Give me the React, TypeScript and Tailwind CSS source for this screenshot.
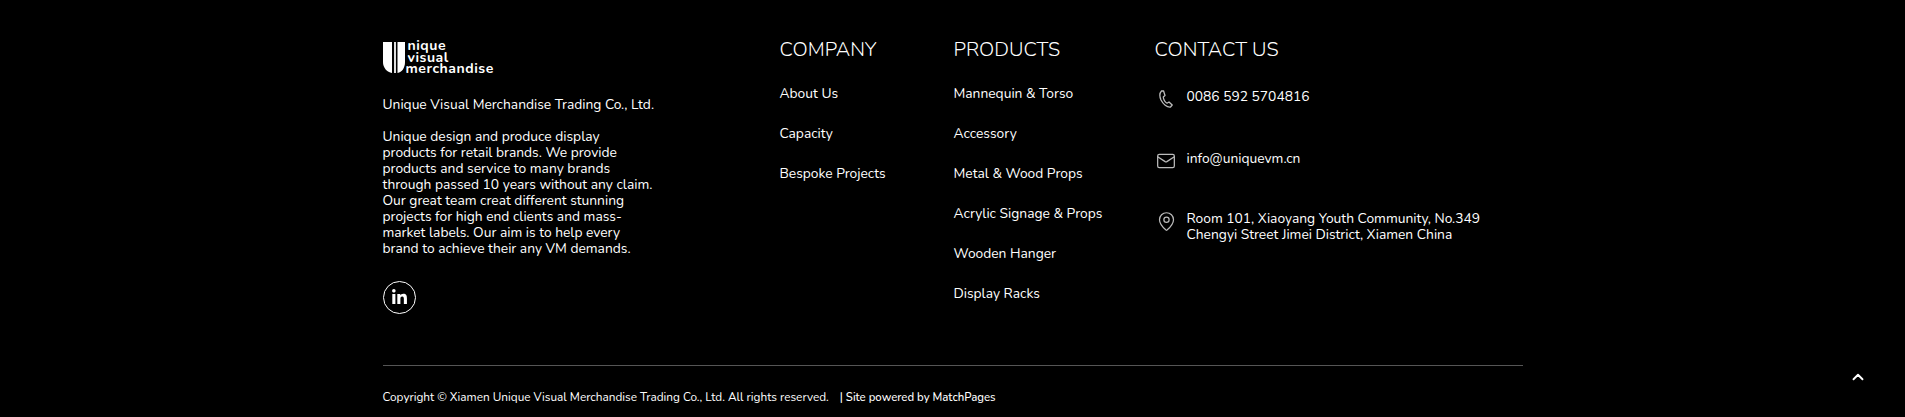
import { ChevronUp, Mail, MapPin } from "lucide-react";
import { FaLinkedinIn } from "react-icons/fa";

const company = ["About Us", "Capacity", "Bespoke Projects"];
const products = [
  "Mannequin & Torso",
  "Accessory",
  "Metal & Wood Props",
  "Acrylic Signage & Props",
  "Wooden Hanger",
  "Display Racks",
];

function LinkColumn({ title, links, className }: { title: string; links: string[]; className: string }) {
  return (
    <div className={className}>
      <h3 className="text-[20px] leading-[24px] font-light">{title}</h3>
      <ul className="mt-[22px] flex flex-col gap-[20px] text-[13.8px] leading-[20px]">
        {links.map((l) => (
          <li key={l}>{l}</li>
        ))}
      </ul>
    </div>
  );
}

function Logo() {
  return (
    <div className="flex h-[32px] items-start">
      <svg width="23" height="31" viewBox="0 0 23 31" className="shrink-0">
        <path d="M0 0h9v31C4 30 0 26 0 20z" fill="#fff" />
        <path d="M11 0h2v31h-2z" fill="#ddd" />
        <path d="M14.500 0H22v20c0 6-3 10-7.500 11z" fill="#fff" />
      </svg>
      <div className="-mt-[2px] flex flex-col text-[14px] leading-[11.500px] font-bold tracking-[0.55px] text-white">
        <span className="ml-[2px]">nique</span>
        <span className="ml-[2px]">visual</span>
        <span>merchandise</span>
      </div>
    </div>
  );
}

export default function App() {
  return (
    <footer className="relative h-[417px] bg-black text-white font-['Nunito','Lato','Noto_Sans',sans-serif]">
      <div className="mx-auto w-[1140px] pt-[38px]">
        <div className="flex h-[328px] border-b border-[#555]">
          <div className="w-[397px] pt-[4px]">
            <Logo />
            <p className="mt-[23px] text-[13.8px] leading-[16px]">Unique Visual Merchandise Trading Co., Ltd.</p>
            <p className="mt-[16px] w-[272px] text-[13.8px] leading-[16px]">
              Unique design and produce display products for retail brands. We provide products and service to many brands
              through passed 10 years without any claim. Our great team creat different stunning projects for high end
              clients and mass-market labels. Our aim is to help every brand to achieve their any VM demands.
            </p>
            <div className="mt-[24px] flex h-[33px] w-[33px] items-center justify-center rounded-full border border-white">
              <FaLinkedinIn size={17} />
            </div>
          </div>
          <LinkColumn title="COMPANY" links={company} className="w-[174px]" />
          <LinkColumn title="PRODUCTS" links={products} className="w-[201px]" />
          <div>
            <h3 className="text-[20px] leading-[24px] font-light">CONTACT US</h3>
            <div className="mt-[27px] flex flex-col text-[13.8px] leading-[16px]">
              <div className="flex h-[62px] items-start">
                <svg width="14" height="18" viewBox="0 0 14 18" className="mt-[1px] ml-[4px] mr-[14px] shrink-0">
                  <path
                    d="M2.500 1L4.500 .8 6 5.500 4.300 7C4.500 9.500 6 12 8 13.200L10 12l3.200 3-1.700 2C8 17.500 4 14 2 10 .5 6.500 .5 3 2.500 1z"
                    fill="none"
                    stroke="#bbb"
                    strokeWidth="1.300"
                    strokeLinejoin="round"
                  />
                </svg>
                <span>0086 592 5704816</span>
              </div>
              <div className="flex h-[60px] items-start">
                <Mail size={20} strokeWidth={1.5} className="ml-[1px] mr-[11px] shrink-0 text-[#bbb]" />
                <span>info@uniquevm.cn</span>
              </div>
              <div className="flex items-start">
                <MapPin size={21} strokeWidth={1.4} className="ml-[1px] mr-[10px] shrink-0 text-[#bbb]" />
                <span className="w-[300px]">
                  Room 101, Xiaoyang Youth Community, No.349 Chengyi Street Jimei District, Xiamen China
                </span>
              </div>
            </div>
          </div>
        </div>
        <div className="mt-[23px] flex items-baseline text-[11.8px] leading-[16px]">
          <span>Copyright © Xiamen Unique Visual Merchandise Trading Co., Ltd. All rights reserved.</span>
          <span className="ml-[11px] text-[11.4px] font-medium">| Site powered by MatchPages</span>
        </div>
      </div>
      <ChevronUp size={18} strokeWidth={2.5} className="absolute right-[38px] top-[368px] text-white" />
    </footer>
  );
}
